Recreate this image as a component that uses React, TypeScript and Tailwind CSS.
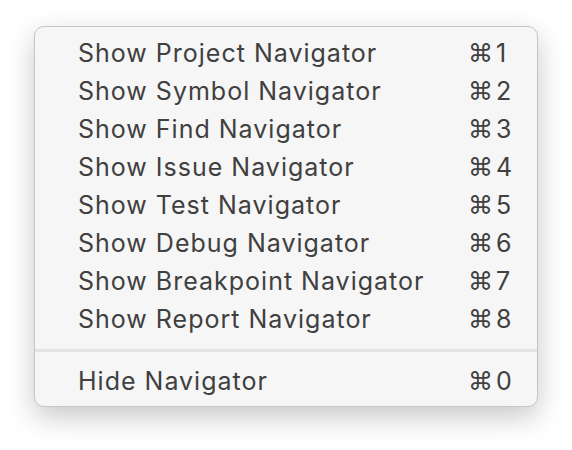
import React from 'react'

const items = [
  { label: 'Show Project Navigator', key: '1' },
  { label: 'Show Symbol Navigator', key: '2' },
  { label: 'Show Find Navigator', key: '3' },
  { label: 'Show Issue Navigator', key: '4' },
  { label: 'Show Test Navigator', key: '5' },
  { label: 'Show Debug Navigator', key: '6' },
  { label: 'Show Breakpoint Navigator', key: '7' },
  { label: 'Show Report Navigator', key: '8' },
]

function Row({ label, shortcut }: { label: string; shortcut: string }) {
  return (
    <div className="flex items-center justify-between h-[38px] pl-[43px] pr-[23px]">
      <span>{label}</span>
      <span className="flex items-center gap-[3px]">
        <span style={{ fontFamily: '"DejaVu Sans", sans-serif' }} className="text-[25px] tracking-normal">⌘</span>
        <span className="w-[18px]">{shortcut}</span>
      </span>
    </div>
  )
}

export default function App() {
  return (
    <div className="w-[572px] h-[450px] bg-white pt-[26px] pl-[34px]">
      <div
        className="w-[504px] h-[381px] rounded-[10px] border border-[#c6c6c6] bg-[#f6f6f6] pt-[8px] text-[25px] tracking-[0.04em] text-[#404040] shadow-[0_10px_28px_rgba(0,0,0,0.22)]"
        style={{ fontFamily: 'Inter, "Liberation Sans", sans-serif' }}
      >
        {items.map((it) => (
          <Row key={it.key} label={it.label} shortcut={it.key} />
        ))}
        {/* separator */}
        <div className="mt-[10px] mb-[11px] h-[3px] bg-[#e4e4e4]" />
        <Row label="Hide Navigator" shortcut="0" />
      </div>
    </div>
  )
}
